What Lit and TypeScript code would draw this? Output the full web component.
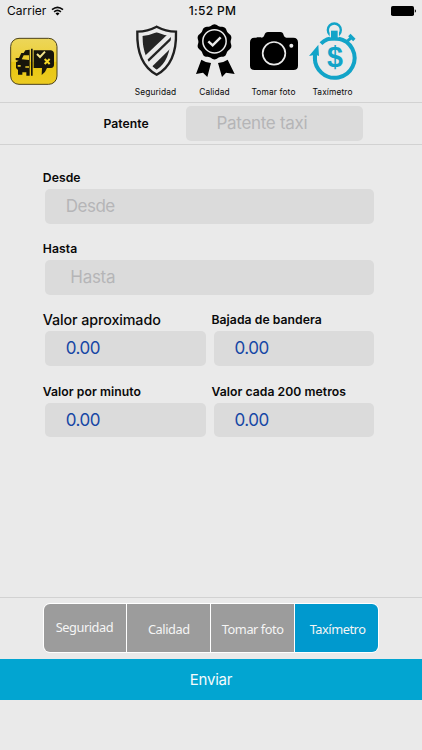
import { LitElement, html, css, svg } from "lit";
import { customElement, property } from "lit/decorators.js";

const rosette = Array.from({ length: 120 }, (_, i) => {
  const a = (i * Math.PI) / 60;
  const r = 50.5 + 2.2 * Math.cos(10 * a);
  return `${(268.5 + r * Math.sin(a)).toFixed(1)},${(80.5 - r * Math.cos(a)).toFixed(1)}`;
}).join(" ");

const shield = svg`<svg viewBox="3 15 177 180">
  <clipPath id="c"><path d="M95 52Q75 61 52 63Q54 138 95 164Q136 138 138 63Q115 61 95 52Z"/></clipPath>
  <path d="M95 35Q68 49 37 50Q34 146 95 179Q156 146 153 50Q122 49 95 35Z" fill="none" stroke="#202020" stroke-width="7"/>
  <g clip-path="url(#c)" fill="#242424">
    <path d="M40 40H147L53 129Z"/>
    <path d="M64 142L145 64" fill="none" stroke="#242424" stroke-width="7"/>
    <path d="M76 160L150 87V190H80Z"/>
  </g></svg>`;

const medal = svg`<svg viewBox="180 15 177 180">
  <polygon points=${rosette}/>
  <circle cx="268.5" cy="79" r="35" fill="none" stroke="#eaeaea" stroke-width="4.5"/>
  <path d="M250 79L263 91L287 67" fill="none" stroke="#eaeaea" stroke-width="7.5"/>
  <path d="M229 134Q240 142 258 144L247 186L234 173L213 177ZM308 134Q297 142 279 144L291 186L303 173L329 177Z"/></svg>`;

const camera = svg`<svg viewBox="12 15 177 180">
  <path d="M43 68H65Q71 68 73 61Q76 51 84 51H121Q129 51 131 61Q133 68 139 68H160Q174 68 174 82V152Q174 165 160 165H44Q30 165 30 152V82Q30 68 43 68Z"/>
  <rect x="50" y="67" width="14" height="4"/>
  <circle cx="102" cy="115" r="34" fill="none" stroke="#eaeaea" stroke-width="5"/>
  <circle cx="154" cy="92" r="6" fill="#eaeaea"/></svg>`;

const stopwatch = svg`<svg viewBox="189 15 177 180">
  <g fill="none" stroke="#12a4c8">
    <path d="M243 86A59.5 59.5 0 1 1 225 123" stroke-width="12"/>
    <circle cx="283" cy="45" r="19.5" stroke-width="7"/>
    <path d="M318 82L334 68" stroke-width="9"/>
    <path d="M328 60L343 75" stroke-width="10"/>
  </g>
  <rect x="271" y="45" width="24" height="26" fill="#12a4c8" stroke="#eaeaea" stroke-width="4"/>
  <rect x="266" y="67" width="34" height="10" fill="#12a4c8"/>
  <path d="M235 89L207 123L219 121V138H231V121L237 123Z" fill="#12a4c8"/>
  <text x="285" y="155" text-anchor="middle" font-family="Liberation Sans" font-size="86" font-weight="700" fill="#12a4c8">$</text></svg>`;

const logo = svg`<svg viewBox="0 0 168 156">
  <defs><linearGradient id="g" x2="0" y2="1"><stop offset="0" stop-color="#ecd65a"/><stop offset=".5" stop-color="#edcf33"/><stop offset=".52" stop-color="#e8c60f"/><stop offset="1" stop-color="#eccb22"/></linearGradient></defs>
  <rect x="17" y="10" width="139" height="138" rx="25" fill="url(#g)" stroke="#4c421b" stroke-width="3"/>
  <path d="M74 44V122H64V112H52V119H39V105L33 99V82L41 77L32 75V69H42L49 54H56L61 46Z" fill="#17150b"/>
  <path d="M50 73L56 61H72V75Z" fill="#eacb2c"/><path d="M38 90H47V95H38ZM61 94H72V98H61Z" fill="#eacb2c"/>
  <path d="M78 41H83V122H78Z" fill="#17150b"/>
  <path d="M86 46H138Q147 48 147 57V89Q147 98 138 99H126Q122 112 110 120L111 99H86Z" fill="#17150b"/>
  <path d="M96 57L105 66L120 50" fill="none" stroke="#f3e48a" stroke-width="6"/>
  <path d="M119 72L134 87M134 72L119 87" stroke="#f5d725" stroke-width="6"/></svg>`;

@customElement("taxi-field")
export class TaxiField extends LitElement {
  @property() label = "";
  @property() text = "";
  static styles = css`
    :host { display: block; height: 71.2px; }
    .label { height: 17px; line-height: 18px; font-size: 12.2px; font-weight: 600; letter-spacing: .05px; white-space: nowrap; }
    :host([large]) .label { font-size: 14.3px; font-weight: 550; line-height: 17px; letter-spacing: -.1px; }
    .box { box-sizing: border-box; height: 34.5px; margin: 3px 0 0 2.5px; padding-left: 20.5px; border-radius: 5px; background: #dbdbdb; font-size: 17px; line-height: 34px; letter-spacing: -.5px; color: #b5b5b7; }
    :host([indent]) .box { padding-left: 25px; letter-spacing: -.3px; }
    :host([value]) .box { color: #1647a5; }
  `;
  render() {
    return html`<div class="label">${this.label}</div><div class="box">${this.text}</div>`;
  }
}

@customElement("app-root")
export class AppRoot extends LitElement {
  static styles = css`
    :host { display: flex; flex-direction: column; height: 750px; background: #eaeaea; color: #090909; font-family: Inter, "Liberation Sans", sans-serif; overflow: hidden; }
    .status { display: grid; grid-template-columns: 1fr auto 1fr; height: 20px; padding: 1px 6px 0 7px; box-sizing: border-box; align-items: center; font-size: 12px; }
    .carrier { display: flex; align-items: center; gap: 5px; }
    .wifi { width: 13px; height: 10px; }
    .time { font-weight: 500; letter-spacing: .3px; padding-left: 2px; }
    .battery { justify-self: end; width: 25px; height: 10px; }
    .header { display: flex; height: 82px; }
    .logo { width: 56px; height: 52px; margin: 15px 65px 0 5px; }
    .item { width: 59px; text-align: center; font-size: 8.4px; letter-spacing: .12px; line-height: 12px; white-space: nowrap; }
    .item svg { display: block; width: 59px; height: 60px; margin-bottom: 6px; }
    .logo svg { display: block; }
    .plate { display: flex; box-sizing: border-box; height: 43px; border: solid #d2d2d2; border-width: 1px 0; padding: 3px 0 0 103.5px; }
    .plate b { width: 82px; font-size: 12.2px; font-weight: 600; line-height: 36px; letter-spacing: .05px; }
    .plate span { box-sizing: border-box; width: 177.5px; height: 34.5px; padding-left: 31px; background: #dbdbdb; border-radius: 5px; color: #b5b5b7; font-size: 17px; line-height: 34px; letter-spacing: -.3px; }
    .form { flex: 1; padding: 24px 48px 0 42.8px; }
    .pair { display: grid; grid-template-columns: 163px 163px; column-gap: 5.7px; }
    .footer { border-top: 1px solid #d2d2d2; height: 62px; padding: 5px 43px 0 42.5px; box-sizing: border-box; }
    .tabs { display: grid; grid-template-columns: repeat(4, 1fr); gap: 1px; box-sizing: border-box; height: 50px; border: 1px solid #fff; border-radius: 7px; overflow: hidden; background: #fff; font: 12.8px "Noto Sans", sans-serif; letter-spacing: -.45px; color: #f5f5f5; text-align: center; line-height: 51px; }
    .tabs span { background: #9c9c9c; }
    .tabs .raised { line-height: 47px; padding-right: 1px; }
    .tabs .active { background: #0099ce; padding-left: 2px; }
    .send { height: 41px; background: #02a5d1; color: #f4fbfd; font-size: 15px; line-height: 41px; letter-spacing: -.2px; text-align: center; }
    .rest { height: 50px; }
  `;
  render() {
    return html`
      <div class="status">
        <div class="carrier"><span>Carrier</span><svg class="wifi" viewBox="0 0 13 10"><path d="M1 3.6Q6.5-1 12 3.6M3.1 5.8Q6.5 3 9.9 5.8" fill="none" stroke="#090909" stroke-width="1.6"/><path d="M4.5 7.4Q6.5 5.8 8.5 7.4L6.5 9.6Z"/></svg></div>
        <div class="time">1:52 PM</div>
        <svg class="battery" viewBox="0 0 25 10"><rect width="23" height="10" rx="1.8"/><path d="M23.8 3.2Q25 4 25 5T23.8 6.8Z"/></svg>
      </div>
      <div class="header">
        <div class="logo">${logo}</div>
        <div class="item">${shield}Seguridad</div>
        <div class="item">${medal}Calidad</div>
        <div class="item">${camera}Tomar foto</div>
        <div class="item">${stopwatch}Taxímetro</div>
      </div>
      <div class="plate"><b>Patente</b><span>Patente taxi</span></div>
      <div class="form">
        <taxi-field label="Desde" text="Desde"></taxi-field>
        <taxi-field indent label="Hasta" text="Hasta"></taxi-field>
        <div class="pair">
          <taxi-field large value label="Valor aproximado" text="0.00"></taxi-field>
          <taxi-field value label="Bajada de bandera" text="0.00"></taxi-field>
          <taxi-field value label="Valor por minuto" text="0.00"></taxi-field>
          <taxi-field value label="Valor cada 200 metros" text="0.00"></taxi-field>
        </div>
      </div>
      <div class="footer"><div class="tabs"><span class="raised">Seguridad</span><span>Calidad</span><span>Tomar foto</span><span class="active">Taxímetro</span></div></div>
      <div class="send">Enviar</div>
      <div class="rest"></div>
    `;
  }
}
